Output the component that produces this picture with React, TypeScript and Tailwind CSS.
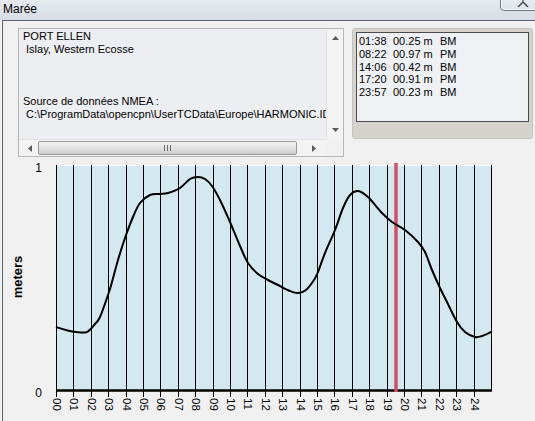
import React from 'react';

const X0 = 56;
const DX = 17.4;
const TOP = 165;
const BASE = 390;

const curve: [number, number][] = [
    [56, 327], [66, 330], [76, 332], [87, 332], [95, 324], [100, 317], [108, 295], [112, 282],
    [118, 260], [125, 238], [133, 217], [140, 203], [150, 195], [160, 194], [168, 193], [180, 188],
    [190, 179], [198, 177], [205, 179], [212, 186], [220, 200], [230, 222], [240, 246], [248, 263],
    [258, 274], [268, 280], [278, 285], [290, 291], [298, 293], [306, 290], [314, 280], [318, 272],
    [325, 253], [335, 230], [343, 208], [350, 195], [358, 191], [368, 197], [382, 213], [392, 222],
    [405, 230], [418, 242], [425, 252], [432, 270], [440, 288], [447, 302], [457, 322], [465, 332],
    [475, 337], [482, 336], [491, 332],
];

const tides = [
    { t: '01:38', h: '00.25', k: 'BM' },
    { t: '08:22', h: '00.97', k: 'PM' },
    { t: '14:06', h: '00.42', k: 'BM' },
    { t: '17:20', h: '00.91', k: 'PM' },
    { t: '23:57', h: '00.23', k: 'BM' },
];

// catmull-rom -> bezier
const smooth = (p: [number, number][]) => {
    let d = `M${p[0][0]},${p[0][1]}`;
    for (let i = 0; i < p.length - 1; i++) {
        const p0 = p[i - 1] || p[i];
        const p1 = p[i];
        const p2 = p[i + 1];
        const p3 = p[i + 2] || p2;
        const c1x = p1[0] + (p2[0] - p0[0]) / 6;
        const c1y = p1[1] + (p2[1] - p0[1]) / 6;
        const c2x = p2[0] - (p3[0] - p1[0]) / 6;
        const c2y = p2[1] - (p3[1] - p1[1]) / 6;
        d += ` C${c1x},${c1y} ${c2x},${c2y} ${p2[0]},${p2[1]}`;
    }
    return d;
};

const Tri = ({ dir }: { dir: 'up' | 'down' | 'left' | 'right' }) => {
    const pts = {
        up: '0,4 3.5,0 7,4',
        down: '0,0 3.5,4 7,0',
        left: '4,0 0,3.5 4,7',
        right: '0,0 4,3.5 0,7',
    }[dir];
    const vert = dir === 'up' || dir === 'down';
    return (
        <svg width={vert ? 7 : 4} height={vert ? 4 : 7}>
            <polygon points={pts} fill="#5a5a5a" />
        </svg>
    );
};

const InfoPanel = () => (
    <div className="w-[326px] h-[129px] border border-[#b7b7b7] grid grid-cols-[1fr_17px] grid-rows-[1fr_17px]">
        <div className="bg-[#edeef2] overflow-hidden whitespace-pre pl-[4px] pt-[1px] text-[11px] leading-[13px] text-black">
            <div>PORT ELLEN</div>
            <div> Islay, Western Ecosse</div>
            <div>&nbsp;</div>
            <div>&nbsp;</div>
            <div>&nbsp;</div>
            <div>Source de données NMEA :</div>
            <div> C:\ProgramData\opencpn\UserTCData\Europe\HARMONIC.IDX</div>
        </div>
        <div className="bg-[#f3f3f3] border-l border-[#e2e2e2] flex flex-col items-center justify-between pt-[7px] pb-[7px]">
            <Tri dir="up" />
            <Tri dir="down" />
        </div>
        <div className="bg-[#f3f3f3] border-t border-[#e2e2e2] flex items-center">
            <div className="w-[19px] flex justify-center pl-[2px]">
                <Tri dir="left" />
            </div>
            <div className="w-[259px] h-[14px] rounded-[2px] border border-[#999] bg-gradient-to-b from-[#f1f1f1] via-[#e2e2e2] to-[#cdcdcd] flex items-center justify-center gap-[2px]">
                <span className="w-px h-[6px] bg-[#6a6a6a]" />
                <span className="w-px h-[6px] bg-[#6a6a6a]" />
                <span className="w-px h-[6px] bg-[#6a6a6a]" />
            </div>
            <div className="flex-1 flex justify-center pl-[4px]">
                <Tri dir="right" />
            </div>
        </div>
        <div className="bg-[#f0f0f0]" />
    </div>
);

const TidePanel = () => (
    <div className="ml-[8px] w-[181px] h-[111px] rounded-[3px] border border-[#c3c3c3] bg-[#d6d3cc] p-[3px] pb-[16px]">
        <div className="h-full border border-[#4b4b4b] bg-[#eef0f4] pl-[2px] pt-[2px] text-[11px] leading-[12.8px] text-black">
            {tides.map((r) => (
                <div key={r.t} className="flex whitespace-pre">
                    <span className="w-[34px]">{r.t}</span>
                    <span className="w-[47px]">{r.h} m</span>
                    <span>{r.k}</span>
                </div>
            ))}
        </div>
    </div>
);

const Chart = () => {
    const hours = Array.from({ length: 26 }, (_, i) => i);
    const hx = (h: number) => Math.round(X0 + h * DX) + 0.5;
    return (
        <svg width={532} height={264} viewBox="3 157 532 264" className="block">
            <rect x={X0} y={TOP} width={491 - X0} height={BASE - TOP} fill="#d4e9ef" />
            <line x1={X0} y1={TOP + 0.5} x2={491} y2={TOP + 0.5} stroke="#f4fafc" />
            {hours.map((h) => (
                <line key={h} x1={hx(h)} y1={TOP} x2={hx(h)} y2={h < 25 ? 397 : BASE} stroke="#000" strokeWidth={1} />
            ))}
            <line x1={X0} y1={390.5} x2={492} y2={390.5} stroke="#000" strokeWidth={2.5} />
            <line x1={396} y1={163} x2={396} y2={392} stroke="#d0506a" strokeWidth={3.5} />
            <path d={smooth(curve)} fill="none" stroke="#000" strokeWidth={2} strokeLinejoin="round" />
            <text x={42} y={168} fontSize={12} textAnchor="end" dominantBaseline="central" fill="#000">1</text>
            <text x={42} y={393} fontSize={12} textAnchor="end" dominantBaseline="central" fill="#000">0</text>
            <text
                x={17}
                y={277}
                fontSize={13}
                fontWeight={700}
                textAnchor="middle"
                dominantBaseline="central"
                transform="rotate(-90 17 277)"
                fill="#000"
            >
                meters
            </text>
            {hours.slice(0, 25).map((h) => {
                const x = hx(h);
                return (
                    <text
                        key={h}
                        x={x}
                        y={398}
                        fontSize={11.5}
                        dominantBaseline="central"
                        transform={`rotate(90 ${x} 398)`}
                        fill="#000"
                    >
                        {String(h).padStart(2, '0')}
                    </text>
                );
            })}
        </svg>
    );
};

export default function App() {
    return (
        <div
            className="relative w-[535px] h-[421px] overflow-hidden bg-[#f0f0f0] text-black"
            style={{ fontFamily: '"Liberation Sans", Arial, sans-serif' }}
        >
            <div className="h-[20px] bg-gradient-to-b from-[#e6eaef] to-[#d7dde4] pl-[3px] pt-[2px] text-[12px] leading-[15px]">
                Marée
            </div>
            <div className="absolute top-[-10px] left-[500px] w-[50px] h-[21px] rounded-[4px] border border-[#6f7880] bg-gradient-to-b from-[#eef1f4] to-[#dfe4e9] shadow-[inset_0_0_0_1px_#fafbfc]">
                <svg className="absolute left-[15px] top-[5px]" width={14} height={11} viewBox="0 0 14 11">
                    <path d="M2 0 L7 4 L12 0 M2 11 L7 6 L12 11" fill="none" stroke="#3a3a3a" strokeWidth={1.4} />
                </svg>
            </div>
            <div className="ml-[2px] h-[401px] border-t border-l border-[#5d6670]">
                <div className="flex items-start pl-[15px] pt-[7px]">
                    <InfoPanel />
                    <TidePanel />
                </div>
                <Chart />
            </div>
        </div>
    );
}
